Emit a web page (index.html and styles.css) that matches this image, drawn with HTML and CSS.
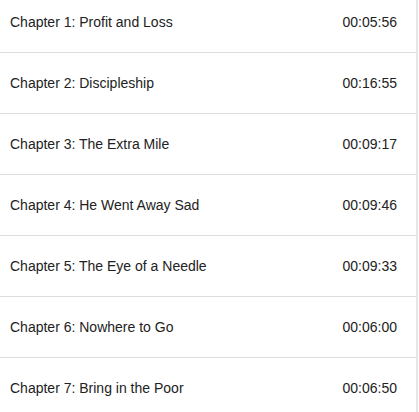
FILE: index.html
```html
<!DOCTYPE html>
<html>
<head>
<meta charset="utf-8">
<link rel="stylesheet" href="styles.css">
</head>
<body>
<div class="frame">
  <ul class="chapters">
    <li class="chapter"><span class="title">Chapter 1: Profit and Loss</span><span class="time">00:05:56</span></li>
    <li class="chapter"><span class="title">Chapter 2: Discipleship</span><span class="time">00:16:55</span></li>
    <li class="chapter"><span class="title">Chapter 3: The Extra Mile</span><span class="time">00:09:17</span></li>
    <li class="chapter"><span class="title">Chapter 4: He Went Away Sad</span><span class="time">00:09:46</span></li>
    <li class="chapter"><span class="title">Chapter 5: The Eye of a Needle</span><span class="time">00:09:33</span></li>
    <li class="chapter"><span class="title">Chapter 6: Nowhere to Go</span><span class="time">00:06:00</span></li>
    <li class="chapter"><span class="title">Chapter 7: Bring in the Poor</span><span class="time">00:06:50</span></li>
  </ul>
</div>
</body>
</html>
```
FILE: styles.css
```css
html, body {
  margin: 0;
  padding: 0;
  background: #ffffff;
  overflow: hidden;
}
.frame {
  width: 416px;
  height: 412px;
  border-right: 2px solid #e6e6e6;
  overflow: hidden;
}
.chapters {
  list-style: none;
  margin: -8px 0 0 0;
  padding: 0;
}
.chapter {
  display: flex;
  align-items: center;
  justify-content: space-between;
  height: 60px;
  padding: 0 19px 0 10px;
  border-bottom: 1px solid #dddddd;
  font-family: "Liberation Sans", Arial, sans-serif;
  font-size: 14px;
  color: #222222;
}
```
